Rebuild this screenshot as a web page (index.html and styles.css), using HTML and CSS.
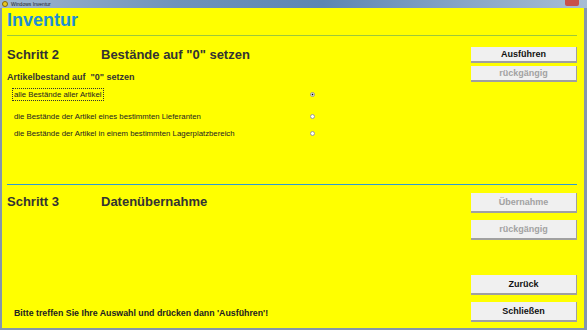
FILE: index.html
```html
<!DOCTYPE html>
<html lang="de">
	<head>
		<meta charset="UTF-8" />
		<meta name="viewport" content="width=device-width, initial-scale=1.0" />
		<title>Inventur</title>
		<link rel="stylesheet" href="styles.css">
	</head>
	<body>
		<div class="window">
			<div class="titlebar">
				<span class="app-icon"></span>
				<span class="title-text">Windows Inventur</span>
				<span class="close-btn"></span>
			</div>

			<div class="client">
				<h1 class="page-title">Inventur</h1>
				<div class="rule-top"></div>

				<div class="step step-two">
					<div class="step-main">
						<h2 class="step-head"><span class="step-no">Schritt 2</span>Bestände auf "0" setzen</h2>
						<div class="sub-head">Artikelbestand auf&nbsp; "0" setzen</div>

						<div class="opt opt-first">
							<span class="opt-label"><span class="focus">alle Bestände aller Artikel</span></span>
							<span class="radio checked"></span>
						</div>
						<div class="opt">
							<span class="opt-label">die Bestände der Artikel eines bestimmten Lieferanten</span>
							<span class="radio"></span>
						</div>
						<div class="opt">
							<span class="opt-label">die Bestände der Artikel in einem bestimmten Lagerplatzbereich</span>
							<span class="radio"></span>
						</div>
					</div>
					<div class="btn-col btn-col-tight">
						<button class="btn btn-small">Ausführen</button>
						<button class="btn btn-small" disabled>rückgängig</button>
					</div>
				</div>

				<div class="rule-step"></div>

				<div class="step step-three">
					<div class="step-main">
						<h2 class="step-head step-head-low"><span class="step-no">Schritt 3</span>Datenübernahme</h2>
					</div>
					<div class="btn-col">
						<button class="btn" disabled>Übernahme</button>
						<button class="btn" disabled>rückgängig</button>
					</div>
				</div>

				<div class="footer">
					<div class="hint">Bitte treffen Sie Ihre Auswahl und drücken dann 'Ausführen'!</div>
					<div class="btn-col">
						<button class="btn">Zurück</button>
						<button class="btn">Schließen</button>
					</div>
				</div>
			</div>
		</div>
	</body>
</html>
```

FILE: styles.css
```css
html,
body {
	margin: 0;
	padding: 0;
	background-color: #7d93ab;
}
body {
	font-family: "Liberation Sans", Arial, sans-serif;
}
.window {
	width: 587px;
	height: 330px;
	display: flex;
	flex-direction: column;
	background-color: #8396ad;
}
.titlebar {
	height: 8px;
	display: flex;
	align-items: center;
	background: linear-gradient(90deg, #9fb6cf 0%, #6f93ba 30%, #5d86b2 55%, #89a7c6 80%, #a7bdd4 100%);
	overflow: hidden;
	position: relative;
}
.app-icon {
	width: 6px;
	height: 6px;
	margin-left: 2px;
	border-radius: 50%;
	background-color: #e8c820;
	border: 1px solid #806010;
	box-sizing: border-box;
}
.title-text {
	font-size: 5px;
	line-height: 8px;
	color: #1a1a1a;
	margin-left: 3px;
}
.close-btn {
	position: absolute;
	right: 8px;
	top: 0;
	width: 14px;
	height: 6px;
	background-color: #c8504a;
	border-radius: 0 0 2px 2px;
}
.client {
	flex: 1;
	margin: 0 3px 2px 2px;
	padding: 0 7px 0 5px;
	background-color: #ffff00;
	display: flex;
	flex-direction: column;
}
.page-title {
	margin: 2px 0 0;
	font-size: 18px;
	line-height: 20px;
	font-weight: bold;
	color: #1f8fd2;
}
.rule-top {
	height: 1px;
	margin-top: 5px;
	background-color: #9cc83a;
}
.step {
	display: grid;
	grid-template-columns: 1fr 106px;
}
.step-two {
	height: 148px;
	padding-top: 11px;
	box-sizing: border-box;
}
.step-three {
	flex: 1;
	padding-top: 8px;
	box-sizing: border-box;
}
.step-head {
	margin: 0;
	display: flex;
	font-size: 13px;
	line-height: 16px;
	font-weight: bold;
	color: #333;
}
.step-head-low {
	margin-top: 1px;
}
.step-no {
	width: 94px;
}
.sub-head {
	margin-top: 8px;
	font-size: 9px;
	line-height: 12px;
	font-weight: bold;
	color: #333;
}
.opt {
	display: flex;
	align-items: center;
	height: 12px;
	margin-top: 5px;
	padding-left: 7px;
	font-size: 7.8px;
	color: #222;
}
.opt-first {
	margin-bottom: 10px;
}
.opt-label {
	width: 296px;
}
.focus {
	outline: 1px dotted #333;
	outline-offset: 1px;
}
.radio {
	width: 5px;
	height: 5px;
	box-sizing: border-box;
	border: 1px solid #9a9a9a;
	border-radius: 50%;
	background-color: #fff;
}
.radio.checked {
	background: radial-gradient(circle, #000 40%, #fff 50%);
}
.rule-step {
	height: 1px;
	background-color: #2d98d4;
}
.btn-col {
	display: flex;
	flex-direction: column;
	gap: 7px;
}
.btn-col-tight {
	gap: 3px;
}
.btn {
	width: 106px;
	height: 20px;
	padding: 0;
	background-color: #f0f0f0;
	border: none;
	border-right: 1px solid #a0a0a0;
	border-bottom: 2px solid #a0a0a0;
	font-family: "Liberation Sans", Arial, sans-serif;
	font-size: 9px;
	font-weight: bold;
	color: #111;
}
.btn-small {
	height: 16px;
}
.btn:disabled {
	color: #a2a2a2;
}
.footer {
	display: grid;
	grid-template-columns: 1fr 106px;
	padding-bottom: 6px;
}
.hint {
	align-self: end;
	margin-bottom: 3px;
	padding-left: 7px;
	font-size: 8.8px;
	line-height: 12px;
	font-weight: bold;
	color: #222;
}
```
